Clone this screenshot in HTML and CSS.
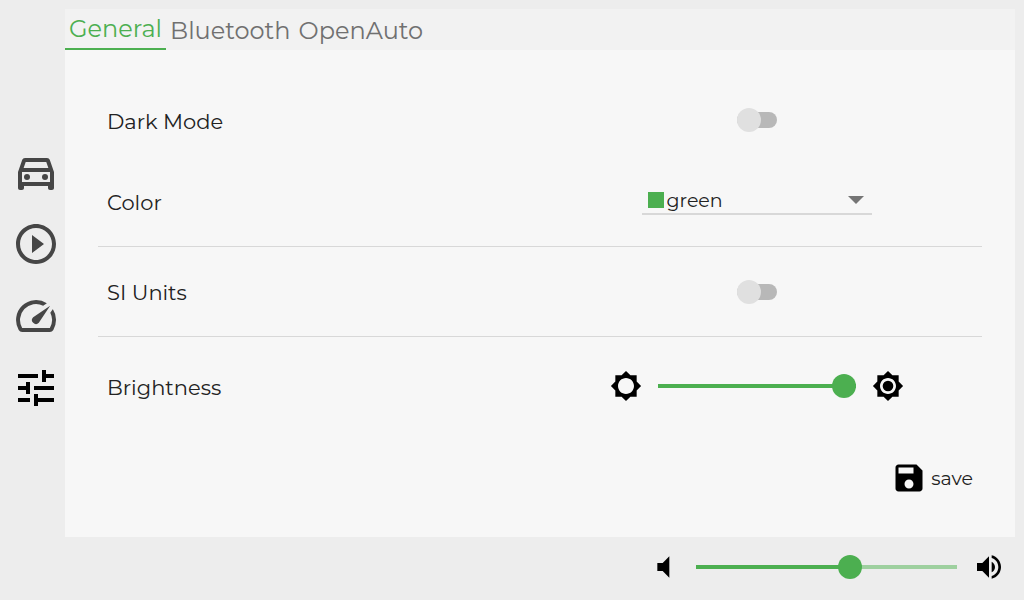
FILE: index.html
```html
<!DOCTYPE html>
<html lang="en">
<head>
<meta charset="utf-8">
<meta name="viewport" content="width=device-width, initial-scale=1">
<title>Settings</title>
<link rel="stylesheet" href="styles.css">
</head>
<body class="app">
  <nav class="sidebar" aria-label="Pages">
    <button class="nav-button" type="button" aria-label="Vehicle">
      <svg class="icon icon-nav" viewBox="0 0 24 24"><path fill-rule="evenodd" d="M18.92 6.01C18.72 5.42 18.16 5 17.5 5h-11c-.66 0-1.21.42-1.42 1.01L3 12v8c0 .55.45 1 1 1h1c.55 0 1-.45 1-1v-1h12v1c0 .55.45 1 1 1h1c.55 0 1-.45 1-1v-8l-2.08-5.99zM6.85 7h10.29l1.04 3H5.81l1.04-3zM19 17H5v-5h14v5z"/><circle cx="7.5" cy="14.5" r="1.5"/><circle cx="16.5" cy="14.5" r="1.5"/></svg>
    </button>
    <button class="nav-button" type="button" aria-label="Media">
      <svg class="icon icon-nav" viewBox="0 0 24 24"><path d="M10 16.5l6-4.5-6-4.5v9zM12 2C6.48 2 2 6.48 2 12s4.480 10 10 10 10-4.480 10-10S17.520 2 12 2zm0 18c-4.410 0-8-3.590-8-8s3.590-8 8-8 8 3.590 8 8-3.590 8-8 8z"/></svg>
    </button>
    <button class="nav-button" type="button" aria-label="Data">
      <svg class="icon icon-nav" viewBox="0 0 24 24"><path d="M20.38 8.57l-1.23 1.85a8 8 0 0 1-.22 7.58H5.07A8 8 0 0 1 15.58 6.85l1.85-1.23A10 10 0 0 0 3.35 19a2 2 0 0 0 1.72 1h13.85a2 2 0 0 0 1.74-1 10 10 0 0 0-.27-10.44zm-9.79 6.84a2 2 0 0 0 2.83 0l5.66-8.49-8.49 5.66a2 2 0 0 0 0 2.83z"/></svg>
    </button>
    <button class="nav-button nav-current" type="button" aria-label="Settings" aria-current="page">
      <svg class="icon icon-nav" viewBox="0 0 24 24"><path d="M3 17v2h6v-2H3zM3 5v2h10V5H3zm10 16v-2h8v-2h-8v-2h-2v6h2zM7 9v2H3v2h4v2h2V9H7zm14 4v-2H11v2h10zm-6-4h2V7h4V5h-4V3h-2v6z"/></svg>
    </button>
  </nav>

  <div class="content">
    <div class="tabs" role="tablist">
      <button class="tab tab-current" type="button" role="tab" aria-selected="true">General</button>
      <button class="tab" type="button" role="tab" aria-selected="false">Bluetooth</button>
      <button class="tab" type="button" role="tab" aria-selected="false">OpenAuto</button>
    </div>

    <main class="panel">
      <div class="row row-first">
        <label class="label" for="dark-mode">Dark Mode</label>
        <div class="control"><input class="switch" type="checkbox" id="dark-mode"></div>
      </div>
      <div class="row row-ruled">
        <label class="label" for="color">Color</label>
        <div class="control">
          <div class="select">
            <span class="swatch"></span>
            <select class="select-input" id="color">
              <option>green</option>
            </select>
            <svg class="select-arrow" viewBox="0 0 16 8"><path d="M0 0h16L8 8z"/></svg>
          </div>
        </div>
      </div>
      <div class="row row-ruled row-units">
        <label class="label" for="si-units">SI Units</label>
        <div class="control"><input class="switch" type="checkbox" id="si-units"></div>
      </div>
      <div class="row row-last">
        <label class="label" for="brightness">Brightness</label>
        <div class="control brightness">
          <svg class="icon" viewBox="0 0 24 24"><path d="M20 15.31L23.31 12 20 8.69V4h-4.69L12 .69 8.69 4H4v4.69L.69 12 4 15.31V20h4.69L12 23.31 15.31 20H20v-4.69zM12 18c-3.31 0-6-2.69-6-6s2.690-6 6-6 6 2.690 6 6-2.690 6-6 6z"/></svg>
          <input class="slider" type="range" id="brightness" min="0" max="100" value="100" style="--fill: 100%">
          <svg class="icon" viewBox="0 0 24 24"><path d="M20 15.31L23.31 12 20 8.69V4h-4.69L12 .69 8.69 4H4v4.69L.69 12 4 15.31V20h4.69L12 23.31 15.31 20H20v-4.69zM12 18c-3.31 0-6-2.69-6-6s2.690-6 6-6 6 2.690 6 6-2.690 6-6 6z"/><circle cx="12" cy="12" r="4"/></svg>
        </div>
      </div>
      <div class="actions">
        <button class="save" type="button">
          <svg class="icon icon-save" viewBox="0 0 24 24"><path d="M17 3H5c-1.110 0-2 .9-2 2v14c0 1.100.89 2 2 2h14c1.100 0 2-.9 2-2V7l-4-4zm-5 16c-1.660 0-3-1.340-3-3s1.340-3 3-3 3 1.340 3 3-1.340 3-3 3zm3-10H5V5h10v4z"/></svg>
          save
        </button>
      </div>
    </main>

    <footer class="volume">
      <svg class="icon" viewBox="0 0 24 24"><path d="M7 9v6h4l5 5V4l-5 5H7z"/></svg>
      <input class="slider" type="range" aria-label="Volume" min="0" max="100" value="60" style="--fill: 60%">
      <svg class="icon" viewBox="0 0 24 24"><path d="M3 9v6h4l5 5V4L7 9H3zm13.5 3c0-1.770-1.020-3.290-2.500-4.030v8.050c1.480-.73 2.500-2.250 2.500-4.020zM14 3.230v2.060c2.890.86 5 3.540 5 6.710s-2.110 5.850-5 6.710v2.060c4.010-.91 7-4.490 7-8.770s-2.990-7.860-7-8.770z"/></svg>
    </footer>
  </div>
</body>
</html>
```
FILE: styles.css
```css
* {
  box-sizing: border-box;
}

.app {
  --accent: #4caf50;
  display: flex;
  min-height: 100vh;
  margin: 0;
  background: #ededed;
  color: #222;
  font-family: Montserrat, Inter, sans-serif;
}

button,
select {
  border: 0;
  background: none;
  color: inherit;
  font: inherit;
  cursor: pointer;
}

.icon {
  display: block;
  flex: none;
  width: 32px;
  height: 32px;
  fill: #000;
}

.sidebar {
  display: flex;
  flex: none;
  flex-direction: column;
  justify-content: center;
  gap: 24px;
  padding: 0 5px 40px 12px;
}

.nav-button {
  padding: 0;
  opacity: 0.7;
}

.nav-current {
  opacity: 1;
}

.icon-nav {
  width: 48px;
  height: 48px;
}

.content {
  display: flex;
  flex: 1;
  flex-direction: column;
  padding: 9px 9px 0 0;
}

.tabs {
  display: flex;
  background: #f2f2f2;
}

.tab {
  height: 41px;
  padding: 2px 4px 0;
  color: #707070;
  font-size: 24px;
  line-height: 39px;
}

.tab-current {
  padding: 0 4px;
  border-bottom: 2px solid var(--accent);
  color: var(--accent);
}

.panel {
  flex: 1;
  padding: 34px 33px 0;
  background: #f7f7f7;
}

.row {
  display: grid;
  grid-template-columns: 1fr 1fr;
  align-items: center;
  height: 90px;
  padding: 0 9px;
}

.row-first {
  height: 72px;
}

.row-last {
  height: 98px;
}

.row-ruled {
  height: 91px;
  border-bottom: 1px solid #d8d8d8;
}

.row-units {
  height: 90px;
}

.label {
  padding-top: 2px;
  font-size: 21px;
}

.control {
  display: flex;
  align-items: center;
  justify-content: center;
}

.switch {
  display: grid;
  align-items: center;
  width: 40px;
  height: 24px;
  margin: 0;
  appearance: none;
  cursor: pointer;
}

.switch::before,
.switch::after {
  grid-area: 1 / 1;
  content: "";
}

.switch::before {
  justify-self: center;
  width: 40px;
  height: 16px;
  border-radius: 8px;
  background: #b8b8b8;
}

.switch::after {
  width: 24px;
  height: 24px;
  border-radius: 50%;
  background: #e0e0e0;
}

.switch:checked::before {
  background: #a5d7a7;
}

.switch:checked::after {
  justify-self: end;
  background: var(--accent);
}

.select {
  display: grid;
  grid-template-columns: 16px 1fr 16px;
  align-items: center;
  width: 230px;
  height: 28px;
  padding: 0 8px 0 6px;
  border-bottom: 2px solid #d8d8d8;
}

.swatch {
  height: 16px;
  background: var(--accent);
}

.select-input {
  padding: 2px 0 0 3px;
  font-size: 19px;
  line-height: 24px;
  appearance: none;
}

.select-arrow {
  width: 16px;
  height: 8px;
  fill: #757575;
}

.brightness {
  gap: 16px;
}

.brightness .slider {
  width: 198px;
}

.slider {
  width: 261px;
  height: 24px;
  margin: 0;
  background: linear-gradient(to right, var(--accent) var(--fill), #9ed09f var(--fill)) center / 100% 4px no-repeat;
  appearance: none;
  cursor: pointer;
}

.slider::-webkit-slider-thumb {
  width: 24px;
  height: 24px;
  border-radius: 50%;
  background: var(--accent);
  appearance: none;
}

.actions {
  display: flex;
  align-items: center;
  justify-content: flex-end;
  height: 86px;
  padding: 0 9px;
}

.save {
  display: flex;
  align-items: center;
  gap: 4px;
  padding: 0;
  font-size: 19px;
}

.icon-save {
  width: 36px;
  height: 36px;
}

.volume {
  display: flex;
  align-items: center;
  justify-content: flex-end;
  gap: 16px;
  height: 63px;
  padding: 0 10px 3px 0;
}
```
